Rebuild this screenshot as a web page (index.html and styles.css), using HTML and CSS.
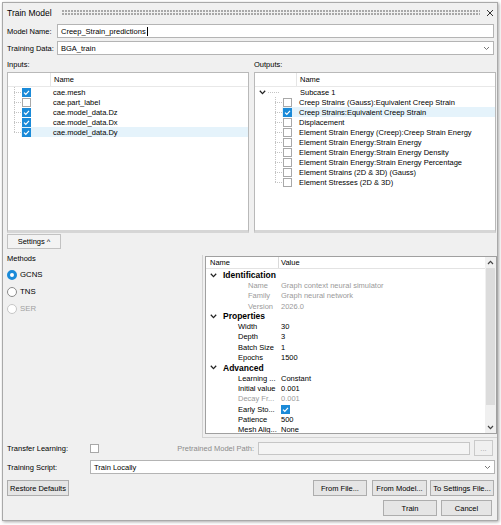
FILE: index.html
```html
<!DOCTYPE html>
<html>
<head>
<meta charset="utf-8">
<link rel="stylesheet" href="styles.css">
</head>
<body>
<div class="window">
  <div class="titlebar">
    <span class="title">Train Model</span>
    <span class="grip"></span>
    <svg class="close" width="8" height="8" viewBox="0 0 8 8"><path d="M1 1L7 7M7 1L1 7" stroke="#333" stroke-width="1"/></svg>
  </div>

  <div class="frow first">
    <span class="lbl">Model Name:</span>
    <div class="textbox">Creep_Strain_predictions<span class="caret"></span></div>
  </div>
  <div class="frow gap3">
    <span class="lbl">Training Data:</span>
    <div class="textbox combo"><span class="ctext">BGA_train</span><svg class="carrow" width="7" height="5" viewBox="0 0 7 5"><path d="M1 1L3.5 3.5L6 1" stroke="#777" stroke-width="1" fill="none"/></svg></div>
  </div>

  <div class="io">
    <div class="io-col">
      <div class="io-label">Inputs:</div>
      <div class="tree">
        <div class="thead"><span class="hc1"></span><span class="hc2">Name</span></div>
        <div class="trow"><span class="tline"></span><span class="tcontent"><span class="cb on"><svg viewBox="0 0 9 9"><path d="M2 4.6L3.8 6.3L7 2.8" stroke="#fff" stroke-width="1.2" fill="none"/></svg></span><span class="tname">cae.mesh</span></span></div>
        <div class="trow"><span class="tline"></span><span class="tcontent"><span class="cb"></span><span class="tname">cae.part_label</span></span></div>
        <div class="trow"><span class="tline"></span><span class="tcontent"><span class="cb on"><svg viewBox="0 0 9 9"><path d="M2 4.6L3.8 6.3L7 2.8" stroke="#fff" stroke-width="1.2" fill="none"/></svg></span><span class="tname">cae.model_data.Dz</span></span></div>
        <div class="trow"><span class="tline"></span><span class="tcontent"><span class="cb on"><svg viewBox="0 0 9 9"><path d="M2 4.6L3.8 6.3L7 2.8" stroke="#fff" stroke-width="1.2" fill="none"/></svg></span><span class="tname">cae.model_data.Dx</span></span></div>
        <div class="trow"><span class="tline last"></span><span class="tcontent sel"><span class="cb on"><svg viewBox="0 0 9 9"><path d="M2 4.6L3.8 6.3L7 2.8" stroke="#fff" stroke-width="1.2" fill="none"/></svg></span><span class="tname">cae.model_data.Dy</span></span></div>
      </div>
    </div>
    <div class="io-col">
      <div class="io-label">Outputs:</div>
      <div class="tree out">
        <div class="thead"><span class="hc1"></span><span class="hc2">Name</span></div>
        <div class="trow"><svg class="expchev" width="7" height="5" viewBox="0 0 7 5"><path d="M0.8 0.8L3.5 3.6L6.2 0.8" stroke="#222" stroke-width="1.3" fill="none"/></svg><span class="subline"></span><span class="tname subname">Subcase 1</span></div>
        <div class="trow"><span class="tline"></span><span class="tcontent"><span class="cb"></span><span class="tname">Creep Strains (Gauss):Equivalent Creep Strain</span></span></div>
        <div class="trow"><span class="tline"></span><span class="tcontent sel"><span class="cb on"><svg viewBox="0 0 9 9"><path d="M2 4.6L3.8 6.3L7 2.8" stroke="#fff" stroke-width="1.2" fill="none"/></svg></span><span class="tname">Creep Strains:Equivalent Creep Strain</span></span></div>
        <div class="trow"><span class="tline"></span><span class="tcontent"><span class="cb"></span><span class="tname">Displacement</span></span></div>
        <div class="trow"><span class="tline"></span><span class="tcontent"><span class="cb"></span><span class="tname">Element Strain Energy (Creep):Creep Strain Energy</span></span></div>
        <div class="trow"><span class="tline"></span><span class="tcontent"><span class="cb"></span><span class="tname">Element Strain Energy:Strain Energy</span></span></div>
        <div class="trow"><span class="tline"></span><span class="tcontent"><span class="cb"></span><span class="tname">Element Strain Energy:Strain Energy Density</span></span></div>
        <div class="trow"><span class="tline"></span><span class="tcontent"><span class="cb"></span><span class="tname">Element Strain Energy:Strain Energy Percentage</span></span></div>
        <div class="trow"><span class="tline"></span><span class="tcontent"><span class="cb"></span><span class="tname">Element Strains (2D &amp; 3D) (Gauss)</span></span></div>
        <div class="trow"><span class="tline last"></span><span class="tcontent"><span class="cb"></span><span class="tname">Element Stresses (2D &amp; 3D)</span></span></div>
      </div>
    </div>
  </div>

  <div class="settings-row"><button class="btn settings">Settings ^</button></div>

  <div class="lower">
    <div class="methods">
      <div class="mlabel">Methods</div>
      <div class="radio-row"><span class="radio on"></span><span>GCNS</span></div>
      <div class="radio-row"><span class="radio"></span><span>TNS</span></div>
      <div class="radio-row dis"><span class="radio"></span><span>SER</span></div>
    </div>
    <div class="pg-panel">
      <div class="pgrid">
        <div class="pg-main">
          <div class="pg-head"><span class="pgh1">Name</span><span class="pgh2">Value</span></div>
          <div class="pg-body">
            <div class="pg-row cat"><svg class="pg-chev" width="7" height="5" viewBox="0 0 7 5"><path d="M0.8 0.8L3.5 3.6L6.2 0.8" stroke="#222" stroke-width="1.3" fill="none"/></svg><span>Identification</span></div>
            <div class="pg-row dis"><span class="pg-key ind2">Name</span><span class="pg-val">Graph context neural simulator</span></div>
            <div class="pg-row dis"><span class="pg-key ind2">Family</span><span class="pg-val">Graph neural network</span></div>
            <div class="pg-row dis"><span class="pg-key ind2">Version</span><span class="pg-val">2026.0</span></div>
            <div class="pg-row cat"><svg class="pg-chev" width="7" height="5" viewBox="0 0 7 5"><path d="M0.8 0.8L3.5 3.6L6.2 0.8" stroke="#222" stroke-width="1.3" fill="none"/></svg><span>Properties</span></div>
            <div class="pg-row"><span class="pg-key">Width</span><span class="pg-val">30</span></div>
            <div class="pg-row"><span class="pg-key">Depth</span><span class="pg-val">3</span></div>
            <div class="pg-row"><span class="pg-key">Batch Size</span><span class="pg-val">1</span></div>
            <div class="pg-row"><span class="pg-key">Epochs</span><span class="pg-val">1500</span></div>
            <div class="pg-row cat"><svg class="pg-chev" width="7" height="5" viewBox="0 0 7 5"><path d="M0.8 0.8L3.5 3.6L6.2 0.8" stroke="#222" stroke-width="1.3" fill="none"/></svg><span>Advanced</span></div>
            <div class="pg-row"><span class="pg-key">Learning ...</span><span class="pg-val">Constant</span></div>
            <div class="pg-row"><span class="pg-key">Initial value</span><span class="pg-val">0.001</span></div>
            <div class="pg-row dis"><span class="pg-key">Decay Fr...</span><span class="pg-val">0.001</span></div>
            <div class="pg-row"><span class="pg-key">Early Sto...</span><span class="pg-val"><span class="cb on"><svg viewBox="0 0 9 9"><path d="M2 4.6L3.8 6.3L7 2.8" stroke="#fff" stroke-width="1.2" fill="none"/></svg></span></span></div>
            <div class="pg-row"><span class="pg-key">Patience</span><span class="pg-val">500</span></div>
            <div class="pg-row"><span class="pg-key">Mesh Alig...</span><span class="pg-val">None</span></div>
          </div>
        </div>
        <div class="vscroll">
          <div class="sarrow"><svg width="7" height="5" viewBox="0 0 7 5"><path d="M1 4L3.5 1.3L6 4" stroke="#444" stroke-width="1.2" fill="none"/></svg></div>
          <div class="sthumb"></div>
          <div class="strack"></div>
          <div class="sarrow"><svg width="7" height="5" viewBox="0 0 7 5"><path d="M1 1L3.5 3.7L6 1" stroke="#444" stroke-width="1.2" fill="none"/></svg></div>
        </div>
      </div>
    </div>
  </div>

  <div class="transfer-row">
    <span class="lbl2">Transfer Learning:</span>
    <span class="cb"></span>
    <span class="pp-label">Pretrained Model Path:</span>
    <span class="pp-input"></span>
    <button class="btn dots" disabled>...</button>
  </div>

  <div class="script-row">
    <span class="lbl2">Training Script:</span>
    <div class="textbox combo"><span class="ctext">Train Locally</span><svg class="carrow" width="7" height="5" viewBox="0 0 7 5"><path d="M1 1L3.5 3.5L6 1" stroke="#777" stroke-width="1" fill="none"/></svg></div>
  </div>

  <div class="btn-row1">
    <button class="btn w-restore">Restore Defaults</button>
    <span class="spacer"></span>
    <button class="btn w-file">From File...</button>
    <button class="btn w-model">From Model...</button>
    <button class="btn w-settings">To Settings File...</button>
  </div>
  <div class="btn-row2">
    <button class="btn w-train">Train</button>
    <button class="btn w-cancel">Cancel</button>
  </div>
</div>
</body>
</html>
```
FILE: styles.css
```css
* { box-sizing: border-box; }
html, body { margin: 0; padding: 0; }
body {
  background: #ffffff;
  font-family: "Liberation Sans", Arial, sans-serif;
  font-size: 7.5px;
  color: #000;
  width: 501px;
  height: 525px;
  overflow: hidden;
}
.window {
  margin: 2px 0 0 2px;
  width: 496px;
  height: 519px;
  border: 1px solid #a9a9a9;
  background: #f0f0f0;
  box-shadow: 1px 1px 3px rgba(0,0,0,0.35);
  display: flex;
  flex-direction: column;
  padding: 0 3px 0 4px;
}
.titlebar {
  height: 20px;
  display: flex;
  align-items: center;
  flex: none;
}
.title { font-size: 8.5px; white-space: nowrap; }
.grip {
  flex: 1;
  height: 6px;
  margin: 0 6px 0 10px;
  background-image: radial-gradient(circle at 1px 1px, #a6a6a6 0.7px, transparent 0.9px);
  background-size: 3px 3px;
}
.close { flex: none; margin-right: 0; }

.frow { display: flex; align-items: center; height: 14px; flex: none; }
.frow.first { margin-top: 1px; }
.frow.gap3 { margin-top: 3px; }
.lbl { width: 50px; flex: none; white-space: nowrap; }
.textbox {
  flex: 1;
  height: 14px;
  border: 1px solid #b4b4b4;
  background: #fff;
  display: flex;
  align-items: center;
  padding-left: 3px;
  white-space: nowrap;
}
.caret { width: 1px; height: 9px; background: #000; margin-left: 1px; }
.combo .ctext { flex: 1; }
.carrow { flex: none; margin-right: 3px; }

.io { display: flex; gap: 5px; margin-top: 5px; margin-right: -2px; flex: none; }
.io-col { flex: 1; display: flex; flex-direction: column; min-width: 0; }
.io-label { height: 10px; line-height: 10px; margin-bottom: 2px; }
.tree {
  height: 161px;
  background: #fff;
  border: 1px solid #b9b9b9;
  border-bottom: 3px solid #d6d6d6;
  overflow: hidden;
}
.thead { display: flex; height: 14px; border-bottom: 1px solid #e8e8e8; }
.thead .hc1 { width: 43px; border-right: 1px solid #e5e5e5; flex: none; }
.thead .hc2 { padding-left: 3px; line-height: 13px; }
.out .thead .hc1 { width: 42px; }

.trow { display: flex; align-items: center; height: 10px; white-space: nowrap; }
.tline {
  width: 7px; height: 10px; margin-left: 6px; flex: none;
  background-image:
    repeating-linear-gradient(to bottom, #c4c4c4 0 1px, transparent 1px 2px),
    repeating-linear-gradient(to right, #c4c4c4 0 1px, transparent 1px 2px);
  background-size: 1px 100%, 100% 1px;
  background-position: left top, left center;
  background-repeat: no-repeat;
}
.tline.last { background-size: 1px 50%, 100% 1px; }
.tcontent { flex: 1; display: flex; align-items: center; height: 10px; padding-left: 1px; }
.tcontent.sel { background: #e5f3fb; }
.tname { margin-left: 22px; }
.out .tline { margin-left: 20px; }
.out .tname { margin-left: 7px; }
.expchev { flex: none; margin-left: 4px; }
.subline {
  width: 12px; height: 1px; margin-left: 2px; flex: none;
  background-image: repeating-linear-gradient(to right, #c4c4c4 0 1px, transparent 1px 2px);
}
.out .tname.subname { margin-left: 20px; }

.cb {
  width: 9px; height: 9px; flex: none;
  border: 1px solid #a8a8a8; background: #fff;
  display: inline-flex;
}
.cb svg { width: 100%; height: 100%; }
.cb.on { background: #1a8ad8; border-color: #1a8ad8; }
.cb.on svg { width: 9px; height: 9px; margin: -1px; }

.settings-row { margin-top: 1px; height: 15px; flex: none; display: flex; }
.btn {
  font-family: "Liberation Sans", Arial, sans-serif;
  font-size: 7.5px;
  color: #000;
  background: #e5e5e5;
  border: 1px solid #adadad;
  padding: 0;
  height: 16px;
  white-space: nowrap;
}
.btn.settings { width: 54px; height: 15px; background: #f3f3f3; border-color: #c2c2c2; }

.lower { display: flex; height: 186px; margin-top: 3px; margin-right: -3px; flex: none; }
.methods { width: 195px; flex: none; }
.mlabel { height: 10px; line-height: 10px; margin-top: 2px; }
.radio-row { display: flex; align-items: center; height: 17px; gap: 3px; font-size: 7.8px; }
.mlabel + .radio-row { margin-top: 2px; }
.radio {
  width: 10px; height: 10px; border-radius: 50%;
  border: 1px solid #8a8a8a; background: #fff; flex: none;
}
.radio.on { border: 3px solid #1a8ad8; }
.radio-row.dis { color: #a0a0a0; }
.radio-row.dis .radio { border-color: #c6c6c6; }

.pg-panel {
  flex: 1;
  margin-top: 3px;
  border-left: 1px solid #d3d3d3;
  border-bottom: 1px solid #d3d3d3;
  padding: 1px 0 3px 2px;
  display: flex;
}
.pgrid { flex: 1; display: flex; border: 1px solid #a0a0a0; background: #fff; }
.pg-main { flex: 1; display: flex; flex-direction: column; overflow: hidden; }
.pg-head { display: flex; height: 12px; border-bottom: 1px solid #e3e3e3; flex: none; }
.pgh1 { width: 73px; flex: none; padding-left: 4px; line-height: 12px; border-right: 1px solid #dadada; }
.pgh2 { padding-left: 2px; line-height: 12px; }
.pg-body { padding-top: 1px; }
.pg-row { display: flex; align-items: center; height: 10.3px; white-space: nowrap; }
.pg-row.cat { font-weight: bold; font-size: 8.5px; }
.pg-chev { margin-left: 4px; margin-right: 6px; flex: none; }
.pg-key { width: 74px; flex: none; padding-left: 32px; overflow: hidden; }
.pg-key.ind2 { padding-left: 42px; }
.pg-val { padding-left: 1px; display: flex; align-items: center; }
.pg-row.dis { color: #9a9a9a; }

.vscroll { width: 11px; flex: none; background: #f0f0f0; display: flex; flex-direction: column; }
.sarrow { height: 11px; display: flex; align-items: center; justify-content: center; flex: none; }
.sthumb { height: 137px; background: #dcdcdc; margin: 0 1px; flex: none; }
.strack { flex: 1; }

.transfer-row { display: flex; align-items: center; height: 16px; margin-top: 2px; flex: none; }
.lbl2 { width: 83px; flex: none; white-space: nowrap; }
.pp-label { flex: 1; text-align: right; padding-right: 4px; color: #8c8c8c; white-space: nowrap; }
.pp-input { width: 212px; height: 13px; border: 1px solid #c6c6c6; background: #f4f4f4; flex: none; }
.btn.dots { width: 19px; margin-left: 4px; margin-right: 1px; color: #a0a0a0; background: #f0f0f0; border-color: #cacaca; }

.script-row { display: flex; align-items: center; height: 14px; margin-top: 4px; margin-right: -1px; flex: none; }

.btn-row1 { display: flex; height: 16px; margin-top: 6px; flex: none; }
.spacer { flex: 1; }
.w-restore { width: 62px; }
.w-file { width: 54px; }
.w-model { width: 55px; margin-left: 5px; }
.w-settings { width: 64px; margin-left: 3px; }
.btn-row2 { display: flex; justify-content: flex-end; height: 16px; margin-top: 4px; padding-right: 2px; flex: none; }
.w-train { width: 54px; }
.w-cancel { width: 51px; margin-left: 4px; }
```
